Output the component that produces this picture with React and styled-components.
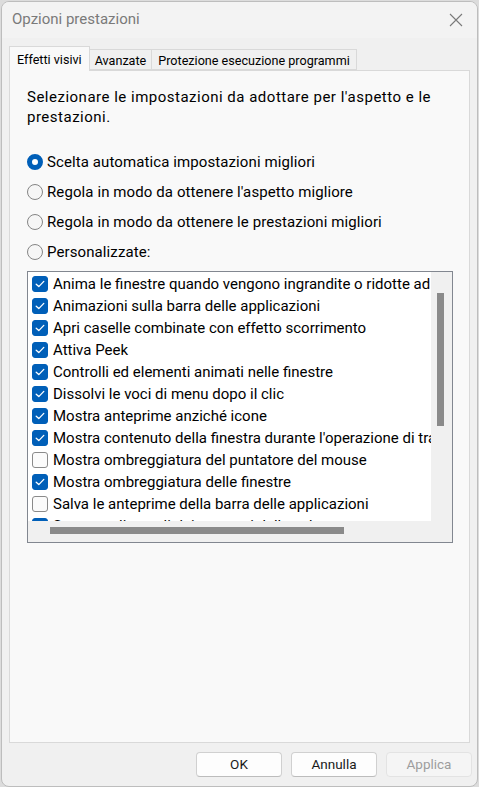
import React from "react";
import styled, { createGlobalStyle } from "styled-components";

const Global = createGlobalStyle`
  html, body { margin: 0; padding: 0; background: #dcdcdc; }
  body { font-family: "Segoe UI", Roboto, "Noto Sans", sans-serif; color: #000; }
  #root { width: 479px; height: 787px; overflow: hidden; }
`;

const Window = styled.div`
  box-sizing: border-box;
  margin: 1px 0 0 1px;
  width: 477px;
  height: 786px;
  background: #f0f0f0;
  border: 1px solid #bdbdbd;
  border-radius: 8px;
  display: flex;
  flex-direction: column;
  overflow: hidden;
`;

const TitleBar = styled.div`
  height: 36px;
  flex: none;
  background: #f3f3f3;
  display: flex;
  align-items: center;
  justify-content: space-between;
  padding: 0 14px 0 10px;
`;

const Title = styled.div`
  font-size: 15px;
  color: #7a7a7a;
  margin-top: -2px;
`;

const TabsRow = styled.div`
  display: flex;
  align-items: flex-end;
  padding: 8px 0 0 7px;
  height: 24px;
  position: relative;
  z-index: 1;
`;

const Tab = styled.div`
  box-sizing: border-box;
  height: ${(p) => (p.$active ? "25px" : "21px")};
  padding: 0 ${(p) => p.$pad || 5}px;
  margin-bottom: ${(p) => (p.$active ? "-1px" : "0")};
  background: ${(p) => (p.$active ? "#f9f9f9" : "#f0f0f0")};
  border: 1px solid #d9d9d9;
  border-bottom: ${(p) => (p.$active ? "none" : "1px solid #d9d9d9")};
  border-left: ${(p) => (p.$active ? "1px solid #d9d9d9" : "none")};
  font-size: 12.6px;
  display: flex;
  align-items: center;
  padding-top: ${(p) => (p.$active ? "0" : "1px")};
`;

const Panel = styled.div`
  box-sizing: border-box;
  margin: 0 7px;
  height: 673px;
  background: #f9f9f9;
  border: 1px solid #d9d9d9;
  padding: 16px 0 0 17px;
  display: flex;
  flex-direction: column;
`;

const Intro = styled.p`
  margin: 0;
  font-size: 15px;
  line-height: 20px;
  letter-spacing: 0.5px;
  width: 426px;
`;

const RadioGroup = styled.div`
  display: flex;
  flex-direction: column;
  gap: 10px;
  margin-top: 25px;
`;

const RadioRow = styled.label`
  display: flex;
  align-items: center;
  height: 20px;
  font-size: 15px;
  letter-spacing: 0.1px;
  gap: 4px;
`;

const RadioDot = styled.span`
  box-sizing: border-box;
  width: 16px;
  height: 16px;
  border-radius: 50%;
  flex: none;
  background: ${(p) => (p.$on ? "#ffffff" : "#f6f6f6")};
  border: ${(p) => (p.$on ? "5px solid #005fb8" : "1px solid #858585")};
`;

const ListBox = styled.div`
  box-sizing: border-box;
  margin-top: 9px;
  width: 426px;
  height: 272px;
  border: 1px solid #828790;
  background: #ffffff;
  display: grid;
  grid-template-columns: 403px 21px;
  grid-template-rows: 249px 21px;
`;

const Rows = styled.div`
  overflow: hidden;
  padding-top: 1px;
  display: flex;
  flex-direction: column;
`;

const Row = styled.div`
  height: 22px;
  flex: none;
  display: flex;
  align-items: center;
  gap: 5px;
  padding-left: 4px;
  white-space: nowrap;
  font-size: 15px;
`;

const Box = styled.span`
  box-sizing: border-box;
  width: 16px;
  height: 16px;
  flex: none;
  border-radius: 3px;
  background: ${(p) => (p.$on ? "#005fb8" : "#fbfbfb")};
  border: 1px solid ${(p) => (p.$on ? "#005fb8" : "#8a8a8a")};
  display: flex;
  align-items: center;
  justify-content: center;
`;

const VTrack = styled.div`
  background: #f0f0f0;
  padding: 21px 0 0 6px;
`;

const VThumb = styled.div`
  width: 7px;
  height: 133px;
  background: #8a8a8a;
`;

const HTrack = styled.div`
  background: #f0f0f0;
  padding: 6px 0 0 22px;
`;

const HThumb = styled.div`
  width: 294px;
  height: 7px;
  background: #8a8a8a;
`;

const Corner = styled.div`
  background: #f0f0f0;
`;

const Footer = styled.div`
  flex: 1;
  display: flex;
  justify-content: flex-end;
  align-items: flex-start;
  gap: 9px;
  padding: 9px 5px 0 0;
`;

const Button = styled.button`
  box-sizing: border-box;
  width: 86px;
  height: 25px;
  border-radius: 4px;
  font-family: inherit;
  font-size: 13.5px;
  background: ${(p) => (p.disabled ? "#f5f5f5" : "#fdfdfd")};
  color: ${(p) => (p.disabled ? "#9d9d9d" : "#1a1a1a")};
  border: 1px solid ${(p) => (p.disabled ? "#e3e3e3" : "#d0d0d0")};
  border-bottom-color: ${(p) => (p.disabled ? "#e3e3e3" : "#bcbcbc")};
  padding: 0 0 1px;
`;

const Check = () => (
  <svg width="10" height="8" viewBox="0 0 10 8">
    <path d="M1.2 4.2 L3.8 6.6 L8.8 1.4" fill="none" stroke="#fff" strokeWidth="1.3" strokeLinecap="round" strokeLinejoin="round" />
  </svg>
);

const CloseIcon = () => (
  <svg width="14" height="14" viewBox="0 0 14 14">
    <path d="M1 1 L13 13 M13 1 L1 13" stroke="#7a7a7a" strokeWidth="1.1" />
  </svg>
);

const items = [
  ["Anima le finestre quando vengono ingrandite o ridotte ad icona", true],
  ["Animazioni sulla barra delle applicazioni", true],
  ["Apri caselle combinate con effetto scorrimento", true],
  ["Attiva Peek", true],
  ["Controlli ed elementi animati nelle finestre", true],
  ["Dissolvi le voci di menu dopo il clic", true],
  ["Mostra anteprime anziché icone", true],
  ["Mostra contenuto della finestra durante l'operazione di trascinamento", true],
  ["Mostra ombreggiatura del puntatore del mouse", false],
  ["Mostra ombreggiatura delle finestre", true],
  ["Salva le anteprime della barra delle applicazioni", false],
  ["Smussa gli angoli dei caratteri dello schermo", true],
];

const radios = [
  ["Scelta automatica impostazioni migliori", true],
  ["Regola in modo da ottenere l'aspetto migliore", false],
  ["Regola in modo da ottenere le prestazioni migliori", false],
  ["Personalizzate:", false],
];

export default function App() {
  return (
    <>
      <Global />
      <Window>
        <TitleBar>
          <Title>Opzioni prestazioni</Title>
          <CloseIcon />
        </TitleBar>
        <TabsRow>
          <Tab $active $pad={7}>Effetti visivi</Tab>
          <Tab $pad={5}>Avanzate</Tab>
          <Tab $pad={6}>Protezione esecuzione programmi</Tab>
        </TabsRow>
        <Panel>
          <Intro>Selezionare le impostazioni da adottare per l'aspetto e le prestazioni.</Intro>
          <RadioGroup>
            {radios.map(([t, on]) => (
              <RadioRow key={t}>
                <RadioDot $on={on} />
                {t}
              </RadioRow>
            ))}
          </RadioGroup>
          <ListBox>
            <Rows>
              {items.map(([t, on]) => (
                <Row key={t}>
                  <Box $on={on}>{on && <Check />}</Box>
                  {t}
                </Row>
              ))}
            </Rows>
            <VTrack>
              <VThumb />
            </VTrack>
            <HTrack>
              <HThumb />
            </HTrack>
            <Corner />
          </ListBox>
        </Panel>
        <Footer>
          <Button>OK</Button>
          <Button>Annulla</Button>
          <Button disabled>Applica</Button>
        </Footer>
      </Window>
    </>
  );
}
